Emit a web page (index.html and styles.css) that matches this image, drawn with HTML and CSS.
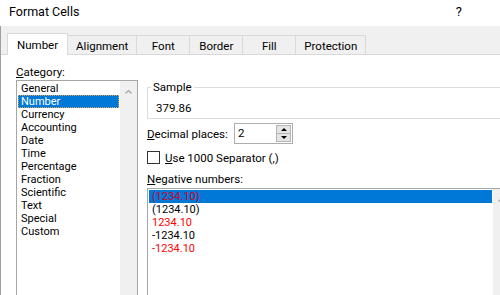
FILE: index.html
```html
<!DOCTYPE html>
<html lang="en">
<head>
    <meta charset="UTF-8">
    <title>Format Cells</title>
    <link rel="stylesheet" href="styles.css">
</head>
<body>
    <div class="dialog">
        <header class="titlebar">
            <span class="title">Format Cells</span>
            <span class="help">?</span>
        </header>

        <div class="body">
            <nav class="tabs">
                <div class="tab active">Number</div>
                <div class="tab">Alignment</div>
                <div class="tab">Font</div>
                <div class="tab">Border</div>
                <div class="tab">Fill</div>
                <div class="tab">Protection</div>
            </nav>

            <section class="panel">
                <div class="cat-col">
                    <label class="field-label"><u>C</u>ategory:</label>
                    <div class="listbox cat-list">
                        <ul>
                            <li>General</li>
                            <li class="selected focused">Number</li>
                            <li>Currency</li>
                            <li>Accounting</li>
                            <li>Date</li>
                            <li>Time</li>
                            <li>Percentage</li>
                            <li>Fraction</li>
                            <li>Scientific</li>
                            <li>Text</li>
                            <li>Special</li>
                            <li>Custom</li>
                        </ul>
                        <div class="vscroll">
                            <svg width="7" height="4" viewBox="0 0 7 4"><path d="M0.5 3.5 L3.5 0.5 L6.5 3.5" fill="none" stroke="#a3a3a3" stroke-width="1.2"/></svg>
                        </div>
                    </div>
                </div>

                <div class="opts">
                    <fieldset class="sample">
                        <legend>Sample</legend>
                        <div class="sample-value">379.86</div>
                    </fieldset>

                    <div class="row decimals">
                        <label><u>D</u>ecimal places:</label>
                        <div class="spin">
                            <span class="spin-value">2</span>
                            <div class="spin-btns">
                                <span class="spin-btn"><i class="arrow up"></i></span>
                                <span class="spin-btn"><i class="arrow down"></i></span>
                            </div>
                        </div>
                    </div>

                    <div class="row sep">
                        <span class="check"></span>
                        <label><u>U</u>se 1000 Separator (,)</label>
                    </div>

                    <label class="field-label neg-label"><u>N</u>egative numbers:</label>
                    <div class="listbox neg-list">
                        <ul>
                            <li class="selected red">(1234.10)</li>
                            <li>(1234.10)</li>
                            <li class="red">1234.10</li>
                            <li>-1234.10</li>
                            <li class="red">-1234.10</li>
                        </ul>
                        <div class="vscroll">
                            <svg width="7" height="4" viewBox="0 0 7 4"><path d="M0.5 3.5 L3.5 0.5 L6.5 3.5" fill="none" stroke="#a3a3a3" stroke-width="1.2"/></svg>
                        </div>
                    </div>
                </div>
            </section>
        </div>
    </div>
</body>
</html>
```

FILE: styles.css
```css
* {
    box-sizing: border-box;
}

body {
    margin: 0;
    font-family: Roboto, "Noto Sans", sans-serif;
    font-size: 11.5px;
    color: #000;
    background: #fff;
}

.dialog {
    width: 500px;
    height: 295px;
    overflow: hidden;
}

.titlebar {
    height: 26px;
    display: flex;
    justify-content: space-between;
    align-items: center;
    padding: 0 38px 3px 9px;
    background: #fff;
}

.title {
    font-size: 12.5px;
}

.help {
    font-size: 13px;
}

.body {
    border-left: 1px solid #a0a0a0;
    height: 269px;
}

/* tab strip */
.tabs {
    display: flex;
    align-items: flex-end;
    height: 29px;
    padding-left: 6px;
    background: #f0f0f0;
    border-bottom: 1px solid #d9d9d9;
}

.tab {
    height: 19px;
    min-width: 54px;
    padding: 0 8px;
    margin-right: -1px;
    line-height: 20px;
    text-align: center;
    background: #f0f0f0;
    border: 1px solid #d9d9d9;
    border-bottom: none;
}

.tab.active {
    height: 22px;
    padding: 0 9px;
    margin-bottom: -1px;
    line-height: 23px;
    background: #fff;
    position: relative;
}

/* tab page */
.panel {
    display: flex;
    height: 240px;
    padding: 10px 0 0 15px;
    background: #fff;
}

.field-label {
    display: block;
    line-height: 15px;
}

.cat-col {
    width: 122px;
    flex: none;
}

.listbox {
    display: flex;
    border: 1px solid #a6a6a6;
    background: #fff;
}

.listbox ul {
    flex: 1;
    margin: 0;
    padding: 1px;
    list-style: none;
    font-size: 11px;
}

.listbox li {
    height: 13px;
    line-height: 13px;
    padding-left: 3px;
    white-space: nowrap;
}

.listbox li.selected {
    background: #0078d7;
    color: #fff;
}

.listbox li.focused {
    outline: 1px dotted #d9a35c;
    outline-offset: -1px;
}

.listbox li.red {
    color: #f00;
}

.listbox li.selected.red {
    color: #d4002a;
}

.vscroll {
    width: 17px;
    flex: none;
    display: flex;
    justify-content: center;
    align-items: flex-start;
    padding-top: 9px;
    background: #f0f0f0;
}

.cat-list {
    height: 230px;
}

/* right column */
.opts {
    width: 364px;
    flex: none;
    margin-left: 9px;
    padding-top: 15px;
}

.sample {
    margin: 0;
    min-width: 0;
    padding: 7px 8px 3px;
    border: 1px solid #dcdcdc;
}

.sample legend {
    margin-left: -5px;
    padding: 0 2px;
    line-height: 14px;
}

.sample-value {
    line-height: 14px;
}

.row {
    display: flex;
    align-items: center;
}

.decimals {
    margin-top: 4px;
    height: 21px;
}

.decimals label {
    width: 87px;
}

.spin {
    display: flex;
    width: 59px;
    height: 21px;
    border: 1px solid #adadad;
    background: #fff;
}

.spin-value {
    flex: 1;
    padding-left: 3px;
    line-height: 19px;
}

.spin-btns {
    display: flex;
    flex-direction: column;
    width: 15px;
    margin: 1px 1px 1px 0;
}

.spin-btn {
    flex: 1;
    display: flex;
    align-items: center;
    justify-content: center;
    background: #e5e5e5;
    border: 1px solid #b5b5b5;
}

.spin-btn + .spin-btn {
    border-top: none;
}

.arrow {
    width: 0;
    height: 0;
    border-left: 3px solid transparent;
    border-right: 3px solid transparent;
}

.arrow.up {
    border-bottom: 3px solid #000;
}

.arrow.down {
    border-top: 3px solid #000;
}

.sep {
    margin-top: 7px;
    height: 13px;
}

.check {
    width: 13px;
    height: 13px;
    margin-right: 5px;
    border: 1px solid #333;
    background: #fff;
}

.sep label {
    line-height: 14px;
}

.neg-label {
    margin-top: 8px;
    line-height: 14px;
}

.neg-list {
    height: 120px;
    margin-top: 2px;
}
```
